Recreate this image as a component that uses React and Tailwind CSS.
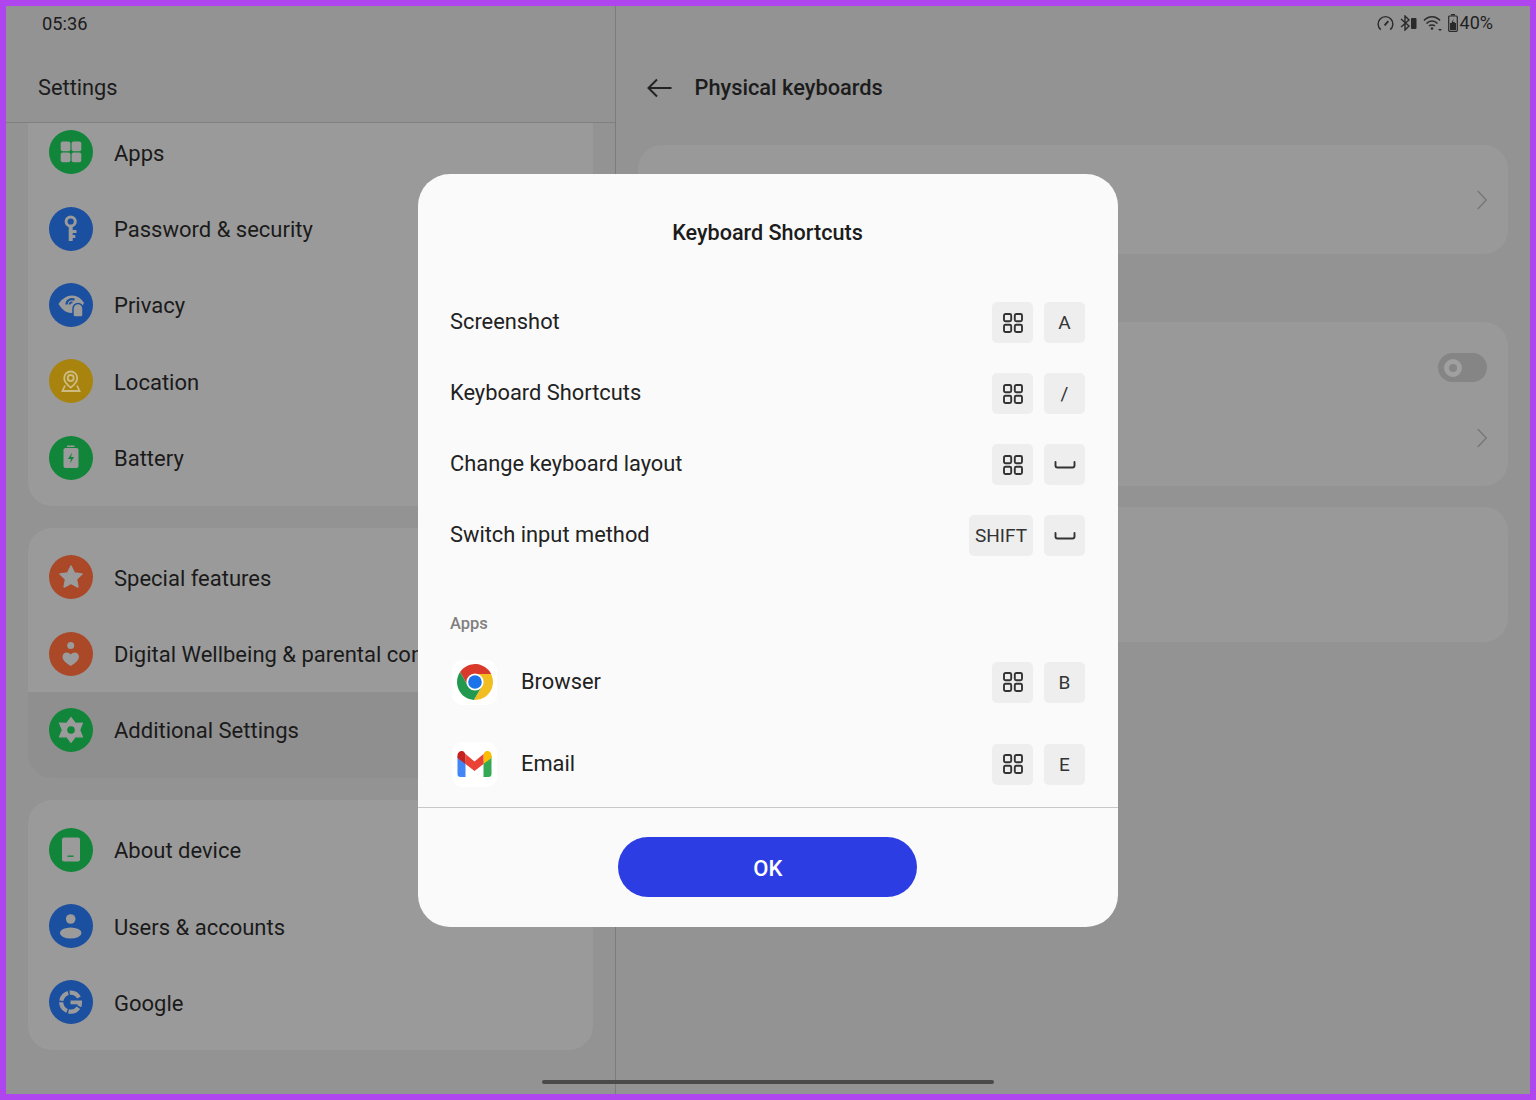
import React from "react";

const P = "#9b9b9b";
const Svg = ({ children }) => (
  <svg viewBox="0 0 44 44" className="absolute inset-0 h-full w-full">{children}</svg>
);

const icons = {
  apps: (
    <Svg>
      <rect x="11.7" y="11.6" width="9.7" height="9.7" rx="2" fill={P} />
      <rect x="22.6" y="11.6" width="9.7" height="9.7" rx="2" fill={P} />
      <rect x="11.7" y="22.5" width="9.7" height="9.7" rx="2" fill={P} />
      <rect x="22.6" y="22.5" width="9.7" height="9.7" rx="2" fill={P} />
    </Svg>
  ),
  key: (
    <Svg>
      <circle cx="21.7" cy="14.5" r="4.6" fill="none" stroke={P} strokeWidth="3" />
      <path d="M19.7 18h4v5h3.8v3h-3.8v2h2.6v3h-2.6v3h-4z" fill={P} />
    </Svg>
  ),
  privacy: (
    <Svg>
      <path d="M9.5 21C13 15.5 18 12.5 23 12.5C28 12.5 32.5 15.5 35 20C32 26 27 30 22 30C17 30 12.5 26 9.5 21Z" fill={P} />
      <path d="M17.5 21.5a5.5 5.5 0 0 1 8-4.8" fill="none" stroke="#1b4f9f" strokeWidth="2.2" />
      <path d="M20.5 21.5a2.3 2.3 0 0 1 3-2" fill="none" stroke="#1b4f9f" strokeWidth="1.8" />
      <path d="M24 25.5a5 5 0 0 1 10 0v6.5a2 2 0 0 1-2 2h-6a2 2 0 0 1-2-2z" fill={P} stroke="#1b4f9f" strokeWidth="1.5" />
    </Svg>
  ),
  location: (
    <Svg>
      <path d="M21.7 28.5c-4-3-6.5-6-6.5-9.5a6.5 6.5 0 0 1 13 0c0 3.5-2.5 6.5-6.5 9.5z" fill="none" stroke="#cdbb80" strokeWidth="1.8" />
      <circle cx="21.7" cy="19" r="3" fill="none" stroke="#cdbb80" strokeWidth="1.8" />
      <path d="M16 26.5l-2.5 5.5h17l-2.5-5.5" fill="none" stroke="#cdbb80" strokeWidth="1.8" />
    </Svg>
  ),
  battery: (
    <Svg>
      <rect x="18" y="9.5" width="7.5" height="1.5" fill={P} />
      <rect x="14.5" y="12" width="15" height="20" rx="2" fill={P} />
      <path d="M23 16.5l-4 6.5h3l-1 4.5l4-6.5h-3z" fill="#118539" />
    </Svg>
  ),
  star: (
    <Svg>
      <path d="M22 11l3.4 7 7.6 1-5.5 5.3 1.4 7.7L22 28.3 15.1 32l1.4-7.7L11 19l7.6-1z" fill={P} stroke={P} strokeWidth="1.5" strokeLinejoin="round" />
    </Svg>
  ),
  heart: (
    <Svg>
      <circle cx="21.7" cy="13.5" r="3.5" fill={P} />
      <path d="M21.7 34c-5-3-8.2-5.8-8.2-9.2 0-4.8 5.8-5.8 8.2-2.3 2.4-3.5 8.2-2.5 8.2 2.3 0 3.4-3.2 6.2-8.2 9.2z" fill={P} />
    </Svg>
  ),
  gear: (
    <Svg>
      <path d="M22 9.5l4.3 5.8 7.2-.3-2.9 7 2.9 7-7.2-.3L22 34.5l-4.3-5.8-7.2.3 2.9-7-2.9-7 7.2.3z" fill={P} stroke={P} strokeWidth="1.2" strokeLinejoin="round" />
      <circle cx="22" cy="22" r="3.8" fill="#118539" />
    </Svg>
  ),
  device: (
    <Svg>
      <rect x="13" y="9.5" width="18" height="24" rx="2" fill={P} />
      <rect x="18.5" y="27.5" width="6" height="1.4" fill="#118539" />
    </Svg>
  ),
  user: (
    <Svg>
      <circle cx="21.7" cy="15" r="4.8" fill={P} />
      <ellipse cx="21.7" cy="29" rx="10.8" ry="5.6" fill={P} />
    </Svg>
  ),
  google: (
    <Svg>
      <path d="M30 17.5A9.5 9.5 0 1 0 31 24" fill="none" stroke={P} strokeWidth="4.2" strokeDasharray="11 1.5" />
      <rect x="21.5" y="20.5" width="11.5" height="3.8" fill={P} />
    </Svg>
  ),
};

const GREEN = "bg-[#118539]";
const BLUE = "bg-[#1b4f9f]";
const YELLOW = "bg-[#a8840f]";
const ORANGE = "bg-[#aa4827]";

function Row({ color, icon, label, selected }) {
  return (
    <div className={`flex h-[76.4px] items-center gap-[21px] pl-[21px] ${selected ? "bg-[#8f8f8f]" : ""}`}>
      <div className={`relative h-[44px] w-[44px] shrink-0 rounded-full ${color}`}>{icons[icon]}</div>
      <span className="mt-[3px] whitespace-nowrap text-[22px] leading-[28px] text-[#1a1a1a] [font-weight:450]">{label}</span>
    </div>
  );
}

function Chip({ wide, children }) {
  return (
    <div className={`flex h-[41px] items-center justify-center rounded-[5px] bg-[#eeeeee] text-[19px] text-[#333333] ${wide ? "w-[64px]" : "w-[41px]"}`}>
      {children}
    </div>
  );
}

const Label = ({ children }) => <span className="pt-[2px]">{children}</span>;

const MetaGlyph = () => (
  <svg viewBox="0 0 20 20" className="h-[20px] w-[20px]" fill="none" stroke="#333" strokeWidth="1.9">
    <rect x="1" y="1" width="7.2" height="7.2" rx="1.5" />
    <rect x="11.8" y="1" width="7.2" height="7.2" rx="1.5" />
    <rect x="1" y="11.8" width="7.2" height="7.2" rx="1.5" />
    <rect x="11.8" y="11.8" width="7.2" height="7.2" rx="1.5" />
  </svg>
);

const SpaceGlyph = () => (
  <svg viewBox="0 0 22 8" className="h-[8px] w-[22px]" fill="none" stroke="#333" strokeWidth="1.9" strokeLinecap="round">
    <path d="M1.5 1V4.5Q1.5 6.5 3.5 6.5H18.5Q20.5 6.5 20.5 4.5V1" />
  </svg>
);

function ShortcutRow({ label, first, second }) {
  return (
    <div className="flex h-[71px] items-center justify-between">
      <span className="text-[21.85px] leading-[28px] text-[#222222]">{label}</span>
      <div className="flex gap-[11px] pt-[2px]">
        {first === "SHIFT" ? <Chip wide><Label>SHIFT</Label></Chip> : <Chip><MetaGlyph /></Chip>}
        <Chip>{second === "space" ? <SpaceGlyph /> : <Label>{second}</Label>}</Chip>
      </div>
    </div>
  );
}

const Chrome = () => (
  <svg viewBox="0 0 36 36" className="h-[36px] w-[36px]">
    <path d="M34.1 10A18 18 0 0 0 3.02 8.06L11.07 22L18 10Z" fill="#d93a2c" />
    <path d="M16.88 35.94A18 18 0 0 0 34.1 10L18 10L24.93 22Z" fill="#f2bd20" />
    <path d="M3.02 8.06A18 18 0 0 0 16.88 35.94L24.93 22L11.07 22Z" fill="#23994f" />
    <circle cx="18" cy="18" r="8.6" fill="#ffffff" />
    <circle cx="18" cy="18" r="6.8" fill="#1a73e8" />
  </svg>
);

const Gmail = () => (
  <svg viewBox="0 0 34 26" className="h-[26px] w-[35px]">
    <path d="M0 5V23a3 3 0 0 0 3 3H8V10Z" fill="#4285f4" />
    <path d="M26 26H31a3 3 0 0 0 3-3V5L26 10Z" fill="#34a853" />
    <path d="M26 3V13L34 7V4a4 4 0 0 0-6.4-3.2Z" fill="#fbbc04" />
    <path d="M8 13V3L17 10.5L26 3V13L17 20Z" fill="#ea4335" />
    <path d="M0 4V7L8 13V3L6.4 0.8A4 4 0 0 0 0 4Z" fill="#c5221f" />
  </svg>
);

function AppRow({ icon, label, letter }) {
  return (
    <div className="flex h-[82px] items-center justify-between">
      <div className="flex items-center gap-[24px]">
        <div className="ml-[2px] flex h-[45px] w-[45px] items-center justify-center rounded-[10px] bg-white">{icon}</div>
        <span className="text-[21.85px] leading-[28px] text-[#222222]">{label}</span>
      </div>
      <div className="flex gap-[11px]">
        <Chip><MetaGlyph /></Chip>
        <Chip><Label>{letter}</Label></Chip>
      </div>
    </div>
  );
}

const Chevron = () => (
  <svg viewBox="0 0 10 20" className="h-[20px] w-[10px]" fill="none" stroke="#777777" strokeWidth="1.4">
    <path d="M0.7 1L9.3 10L0.7 19" />
  </svg>
);

const StatusIcons = () => (
  <div className="flex items-center text-[#222222]">
    <svg viewBox="0 0 18 18" className="mr-[6px] h-[17px] w-[17px]" fill="none" stroke="#2a2a2a" strokeWidth="1.5">
      <path d="M4 15.5A7.8 7.8 0 1 1 14 15.5" />
      <path d="M8 11L12 6.5" strokeWidth="2" />
    </svg>
    <svg viewBox="0 0 17 16" className="mr-[6px] h-[16px] w-[17px]">
      <path d="M1 4L9 11L5 15V1L9 5L1 12" fill="none" stroke="#2a2a2a" strokeWidth="1.4" />
      <rect x="11" y="3" width="5.5" height="11" rx="1" fill="#2a2a2a" />
    </svg>
    <svg viewBox="0 0 20 16" className="mr-[5px] h-[16px] w-[20px]" fill="none" stroke="#2a2a2a" strokeWidth="1.5">
      <path d="M1 5.5C5.5 0.5 12.5 0.5 17 5.5" />
      <path d="M3.5 8.5C6.5 5.3 11.5 5.3 14.5 8.5" />
      <path d="M6 11C7.5 9.7 10.5 9.7 12 11" />
      <circle cx="9" cy="13.5" r="1.3" fill="#2a2a2a" stroke="none" />
      <path d="M15 14h4l-2 2z" fill="#2a2a2a" stroke="none" />
    </svg>
    <svg viewBox="0 0 10 18" className="mr-[2px] h-[18px] w-[10px]">
      <rect x="3" y="0" width="4" height="1.5" fill="#2a2a2a" />
      <rect x="0.7" y="2" width="8.6" height="15.3" rx="1" fill="none" stroke="#2a2a2a" strokeWidth="1.2" />
      <rect x="2" y="9" width="6" height="7" fill="#2a2a2a" />
      <path d="M5.5 4.5L3 10h2l-.5 3.5L7 8H5z" fill="#2a2a2a" />
    </svg>
    <span className="text-[18px] leading-[20px] text-[#222222]">40%</span>
  </div>
);

export default function App() {
  return (
    <div className="relative flex h-[1100px] w-[1536px] overflow-hidden border-[6px] border-[#ae45ee] bg-[#939393] font-['Roboto',sans-serif]">
      {/* Left pane */}
      <div className="flex w-[610px] shrink-0 flex-col border-r border-[#7c7c7c]">
        <div className="h-[117px] shrink-0 border-b border-[#808080]">
          <div className="pl-[36px] pt-[6px] text-[18.3px] leading-[24px] text-[#1c1c1c]">05:36</div>
          <div className="pl-[32px] pt-[38px] text-[21.8px] leading-[28px] text-[#1c1c1c]">Settings</div>
        </div>
        <div className="flex flex-col gap-[22px] overflow-hidden pl-[22px] pr-[22px]">
          <div className="h-[383px] shrink-0 overflow-hidden rounded-b-[24px] bg-[#9a9a9a]">
            <div className="-mt-[9px]">
              <Row color={GREEN} icon="apps" label="Apps" />
              <Row color={BLUE} icon="key" label="Password & security" />
              <Row color={BLUE} icon="privacy" label="Privacy" />
              <Row color={YELLOW} icon="location" label="Location" />
              <Row color={GREEN} icon="battery" label="Battery" />
            </div>
          </div>
          <div className="h-[250px] shrink-0 overflow-hidden rounded-[24px] bg-[#9a9a9a] pt-[11px]">
            <Row color={ORANGE} icon="star" label="Special features" />
            <Row color={ORANGE} icon="heart" label="Digital Wellbeing & parental controls" />
            <div className="h-[86px] bg-[#8f8f8f]">
              <Row color={GREEN} icon="gear" label="Additional Settings" selected />
            </div>
          </div>
          <div className="h-[250px] shrink-0 overflow-hidden rounded-[24px] bg-[#9a9a9a] pt-[11.5px]">
            <Row color={GREEN} icon="device" label="About device" />
            <Row color={BLUE} icon="user" label="Users & accounts" />
            <Row color={BLUE} icon="google" label="Google" />
          </div>
        </div>
      </div>

      {/* Right pane */}
      <div className="flex flex-1 flex-col">
        <div className="h-[139px] shrink-0">
          <div className="flex justify-end pr-[37px] pt-[7px]"><StatusIcons /></div>
          <div className="flex items-center gap-[23px] pl-[30.5px] pt-[41px]">
            <svg viewBox="0 0 25 20" className="h-[20px] w-[25px]" fill="none" stroke="#222222" strokeWidth="2">
              <path d="M24.5 10H2M10 1.5L1.5 10L10 18.5" />
            </svg>
            <span className="text-[21.8px] leading-[28px] text-[#1c1c1c] [font-weight:500]">Physical keyboards</span>
          </div>
        </div>
        <div className="ml-[22px] flex h-[109px] w-[870px] shrink-0 items-center justify-end rounded-[24px] bg-[#999999] pr-[21px]">
          <Chevron />
        </div>
        <div className="ml-[22px] mt-[68px] flex h-[164px] w-[870px] shrink-0 flex-col items-end rounded-[24px] bg-[#999999] pr-[21px] pt-[31px]">
          <div className="flex h-[29px] w-[49px] items-center rounded-full bg-[#858585] pl-[6px]">
            <div className="h-[18px] w-[18px] rounded-full border-[5px] border-[#a0a0a0]" />
          </div>
          <div className="mt-[46px]"><Chevron /></div>
        </div>
        <div className="ml-[22px] mt-[21px] h-[135px] w-[870px] shrink-0 rounded-[24px] bg-[#999999]" />
      </div>

      {/* Home indicator */}
      <div className="absolute left-[536px] top-[1074px] h-[4px] w-[452px] rounded-full bg-[#4a4a4a]" />

      {/* Dialog */}
      <div className="absolute left-[412px] top-[167.5px] flex h-[753px] w-[699.5px] flex-col rounded-[32px] bg-[#fafafa]">
        <div className="flex-1 pl-[32px] pr-[32.5px]">
          <div className="pt-[45.5px] text-center text-[21.6px] leading-[28px] text-[#1c1c1c] [font-weight:500]">Keyboard Shortcuts</div>
          <div className="mt-[39px]">
            <ShortcutRow label="Screenshot" first="meta" second="A" />
            <ShortcutRow label="Keyboard Shortcuts" first="meta" second="/" />
            <ShortcutRow label="Change keyboard layout" first="meta" second="space" />
            <ShortcutRow label="Switch input method" first="SHIFT" second="space" />
          </div>
          <div className="mt-[44px] text-[16.5px] leading-[20px] text-[#808080] [font-weight:500]">Apps</div>
          <div className="mt-[7px]">
            <AppRow icon={<Chrome />} label="Browser" letter="B" />
            <AppRow icon={<Gmail />} label="Email" letter="E" />
          </div>
        </div>
        <div className="flex h-[120px] shrink-0 items-center justify-center border-t-[1.5px] border-[#c8c8c8]">
          <button className="h-[60px] w-[299px] rounded-full bg-[#2d3de4] pt-[3px] text-[22px] text-white [font-weight:500]">OK</button>
        </div>
      </div>
    </div>
  );
}
